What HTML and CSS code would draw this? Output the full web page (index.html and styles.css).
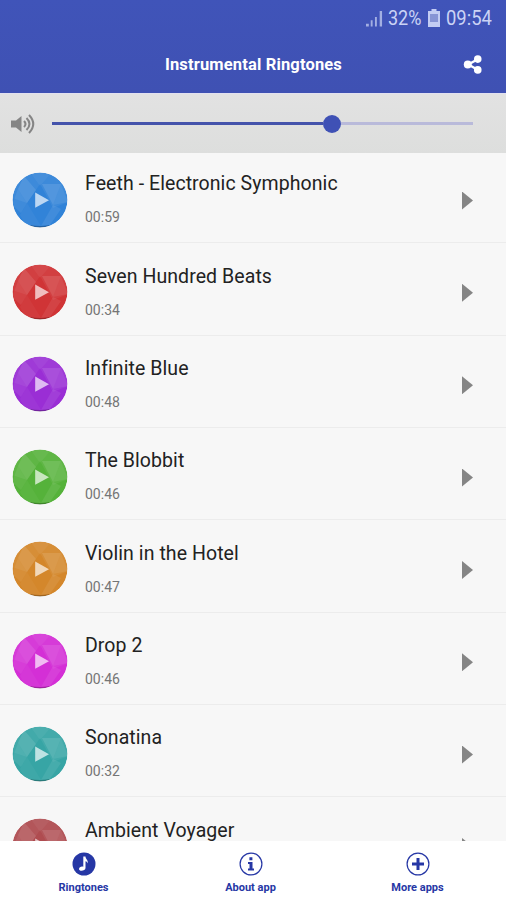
FILE: index.html
```
<!DOCTYPE html>
<html lang="en">
<head>
<meta charset="utf-8">
<title>Instrumental Ringtones</title>
<link rel="stylesheet" href="styles.css">
</head>
<body>
<svg class="defs" aria-hidden="true">
  <symbol id="disc" viewBox="0 0 56 56">
    <g clip-path="url(#round)">
      <circle cx="28" cy="28" r="27.500" fill="currentColor"/>
      <path d="M0 0h56v30L41 36 28 12 15 31 0 26z" fill="#fff" opacity=".06"/>
      <path d="M12 4l12 14-9 13L6 17z" fill="#fff" opacity=".1"/>
      <path d="M6 17l9 14-6 10-9-8z" fill="#fff" opacity=".07"/>
      <path d="M18 0h22L28 14z" fill="#fff" opacity=".05"/>
      <path d="M30 12h19l-8 21z" fill="#fff" opacity=".11"/>
      <path d="M49 12l7 18-15 3z" fill="#fff" opacity=".07"/>
      <path d="M41 33l8 4-11 16-9 1z" fill="#fff" opacity=".08"/>
      <path d="M15 31l14 23H14L8 43z" fill="#fff" opacity=".04"/>
      <path d="M18 53q10 2 20 0l-5 4H22z" fill="#000" opacity=".25"/>
    </g>
    <path d="M23.200 20.500L37 28.200l-13.800 7.500z" fill="#fff" opacity=".68"/>
  </symbol>
  <clipPath id="round"><circle cx="28" cy="28" r="27.500"/></clipPath>
</svg>
<div class="app">
  <header>
    <div class="status">
      <svg class="signal" viewBox="0 0 18 18"><path d="M0 15h3v3H0zM5 11.500h2V18H5z"/><path d="M9.500 8h2v10h-2zM14.500 1.500h2.500v16.500h-2.500z"/></svg>
      <span class="percent">32%</span>
      <svg class="battery" viewBox="0 0 12 18"><path d="M3.500 0h5v2H12v16H0V2h3.500z"/><path class="level" d="M2 5h8v8H2z"/></svg>
      <span class="clock">09:54</span>
    </div>
    <div class="bar">
      <h1>Instrumental Ringtones</h1>
      <svg class="share" viewBox="0 0 20 20"><path d="M15 4.500L5 10l10 5.500" fill="none" stroke="#fff" stroke-width="2.500"/><circle cx="15" cy="4.300" r="4"/><circle cx="4.500" cy="10" r="4.200"/><circle cx="15" cy="15.700" r="4"/></svg>
    </div>
  </header>
  <section class="volume">
    <svg class="speaker" viewBox="0 0 24 20"><path d="M0 6.500h5L10.500 2v16L5 13.500H0z" fill="#858585"/><path d="M13 7q3 3 0 6M15.500 4q6 6 0 12M18 1q8.500 9 0 18" fill="none" stroke="#858585" stroke-width="2"/></svg>
    <div class="track"><div class="played"></div><div class="knob"></div><div class="rest"></div></div>
  </section>
  <main>
    <article class="blue"><svg class="disc"><use href="#disc"/></svg><div><h2>Feeth - Electronic Symphonic</h2><p>00:59</p></div><i></i></article>
    <article class="red"><svg class="disc"><use href="#disc"/></svg><div><h2>Seven Hundred Beats</h2><p>00:34</p></div><i></i></article>
    <article class="purple"><svg class="disc"><use href="#disc"/></svg><div><h2>Infinite Blue</h2><p>00:48</p></div><i></i></article>
    <article class="green"><svg class="disc"><use href="#disc"/></svg><div><h2>The Blobbit</h2><p>00:46</p></div><i></i></article>
    <article class="orange"><svg class="disc"><use href="#disc"/></svg><div><h2>Violin in the Hotel</h2><p>00:47</p></div><i></i></article>
    <article class="pink"><svg class="disc"><use href="#disc"/></svg><div><h2>Drop 2</h2><p>00:46</p></div><i></i></article>
    <article class="teal"><svg class="disc"><use href="#disc"/></svg><div><h2>Sonatina</h2><p>00:32</p></div><i></i></article>
    <article class="brown"><svg class="disc"><use href="#disc"/></svg><div><h2>Ambient Voyager</h2></div><i></i></article>
  </main>
  <nav>
    <a><svg viewBox="0 0 24 24"><circle cx="12" cy="12" r="11.500" fill="#2637a5"/><path d="M11.300 4.500h2.200c.1 3 3 3.400 2.200 7-.5-1.500-1.200-2-2.200-2.200V16c0 3-6.500 4-6.500 1 0-2 2.500-3 4.300-2.300z" fill="#fff"/></svg><span>Ringtones</span></a>
    <a><svg viewBox="0 0 24 24"><circle cx="12" cy="12" r="10.900" fill="none" stroke="#2637a5" stroke-width="1.200"/><path d="M10.400 5.300h3v3h-3zM9 10h4.500v6.500H15v2H9v-2h1.500V12H9z" fill="#2637a5"/></svg><span>About app</span></a>
    <a><svg viewBox="0 0 24 24"><circle cx="12" cy="12" r="10.900" fill="none" stroke="#2637a5" stroke-width="1.200"/><path d="M12 6v12M6 12h12" stroke="#2637a5" stroke-width="3"/></svg><span>More apps</span></a>
  </nav>
</div>
</body>
</html>
```

FILE: styles.css
```
* { box-sizing: border-box; }
body { margin: 0; font-family: Roboto, "Liberation Sans", sans-serif; }
h1, h2, p { margin: 0; font-weight: 400; white-space: nowrap; }
.defs { position: absolute; width: 0; height: 0; }
.app { width: 506px; height: 900px; display: flex; flex-direction: column; overflow: hidden; background: #fff; }
header { flex: none; height: 93px; background: linear-gradient(#4054b9, #3f51b3); color: #fff; }
.status { height: 36px; padding-right: 14px; display: flex; align-items: center; justify-content: flex-end; font-size: 20px; line-height: 36px; color: #cbd3f5; }
.status svg { fill: #c3ccf3; }
.status .signal { width: 17px; height: 18px; margin-right: 5px; fill: #a3afe2; }
.percent { width: 35px; transform: scaleX(.9); transform-origin: left; }
.battery { width: 12px; height: 18px; margin: 0 6px 0 5px; }
.status .level { fill: #8794d5; }
.clock { width: 46px; transform: scaleX(.92); transform-origin: left; }
.bar { height: 57px; padding: 0 23px 0 165px; display: flex; align-items: center; justify-content: space-between; }
h1 { font-size: 16.500px; font-weight: 700; line-height: 20px; letter-spacing: .15px; }
.share { width: 20px; height: 19px; fill: #fff; }
.volume { flex: none; height: 60px; padding: 0 33px 0 11px; display: flex; align-items: center; background: linear-gradient(#e2e2e2, #dddedd); border-top: 1px solid #e2e1f0; }
.speaker { width: 24px; height: 20px; }
.track { flex: 1; margin-left: 17px; display: flex; align-items: center; }
.played { width: 271px; height: 3px; background: #4453ab; }
.knob { width: 18px; height: 18px; border-radius: 50%; background: #3f51b5; }
.rest { flex: 1; height: 3px; background: #b9bada; }
main { flex: none; height: 688px; overflow: hidden; background: #f7f7f7; }
article { height: 92.350px; padding: 20.500px 33px 0 12px; display: flex; border-bottom: 1px solid #ececec; }
article:first-child { height: 90.350px; padding-top: 18.500px; }
.disc { width: 56px; height: 56px; flex: none; }
article div { flex: 1; margin-left: 17px; }
h2 { font-size: 19.500px; line-height: 24px; letter-spacing: .07px; margin-top: .8px; color: #222; }
p { font-size: 14px; line-height: 18px; margin-top: 12px; color: #757575; }
article i { width: 11px; height: 18px; margin-top: 20px; background: #858585; clip-path: polygon(0 0, 100% 50%, 0 100%); }
.blue { color: #3183d8; }
.red { color: #d03436; }
.purple { color: #9a2ed5; }
.green { color: #55b23a; }
.orange { color: #d4872b; }
.pink { color: #d42fd6; }
.teal { color: #37a5a5; }
.brown { color: #af4c50; }
nav { flex: none; height: 59px; display: flex; padding: 0 5px 0 0; background: #fff; }
nav a { flex: 1; display: flex; flex-direction: column; align-items: center; padding-top: 11px; color: #2637a5; }
nav svg { width: 24px; height: 24px; }
nav span { font-size: 11px; font-weight: 700; line-height: 14px; margin-top: 5px; }
```
